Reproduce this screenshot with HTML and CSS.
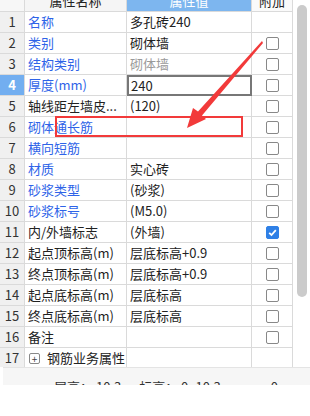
FILE: index.html
```html
<!DOCTYPE html>
<html lang="zh-CN">
<head>
    <meta charset="UTF-8">
    <title>属性编辑</title>
    <link rel="stylesheet" href="styles.css">
</head>
<body>
    <div class="panel">
        <div class="grid-wrap">
            <div class="grid">
                <div class="row head">
                    <div class="num"></div>
                    <div class="name">属性名称</div>
                    <div class="val">属性值</div>
                    <div class="add">附加</div>
                </div>
                <div class="row">
                    <div class="num">1</div>
                    <div class="name blue">名称</div>
                    <div class="val">多孔砖240</div>
                    <div class="add"></div>
                </div>
                <div class="row">
                    <div class="num">2</div>
                    <div class="name blue">类别</div>
                    <div class="val">砌体墙</div>
                    <div class="add"><span class="box"></span></div>
                </div>
                <div class="row">
                    <div class="num">3</div>
                    <div class="name blue">结构类别</div>
                    <div class="val muted">砌体墙</div>
                    <div class="add"><span class="box"></span></div>
                </div>
                <div class="row current">
                    <div class="num">4</div>
                    <div class="name blue">厚度(mm)</div>
                    <div class="val edit">240</div>
                    <div class="add"><span class="box"></span></div>
                </div>
                <div class="row">
                    <div class="num">5</div>
                    <div class="name">轴线距左墙皮...</div>
                    <div class="val">(120)</div>
                    <div class="add"><span class="box"></span></div>
                </div>
                <div class="row">
                    <div class="num">6</div>
                    <div class="name blue">砌体通长筋</div>
                    <div class="val"></div>
                    <div class="add"><span class="box"></span></div>
                </div>
                <div class="row">
                    <div class="num">7</div>
                    <div class="name blue">横向短筋</div>
                    <div class="val"></div>
                    <div class="add"><span class="box"></span></div>
                </div>
                <div class="row">
                    <div class="num">8</div>
                    <div class="name blue">材质</div>
                    <div class="val">实心砖</div>
                    <div class="add"><span class="box"></span></div>
                </div>
                <div class="row">
                    <div class="num">9</div>
                    <div class="name blue">砂浆类型</div>
                    <div class="val">(砂浆)</div>
                    <div class="add"><span class="box"></span></div>
                </div>
                <div class="row">
                    <div class="num">10</div>
                    <div class="name blue">砂浆标号</div>
                    <div class="val">(M5.0)</div>
                    <div class="add"><span class="box"></span></div>
                </div>
                <div class="row">
                    <div class="num">11</div>
                    <div class="name">内/外墙标志</div>
                    <div class="val">(外墙)</div>
                    <div class="add"><span class="box checked"><svg viewBox="0 0 13 13" width="13" height="13"><path d="M3.2 6.8 L5.5 9 L9.8 4.2" fill="none" stroke="#fff" stroke-width="1.8"/></svg></span></div>
                </div>
                <div class="row">
                    <div class="num">12</div>
                    <div class="name">起点顶标高(m)</div>
                    <div class="val">层底标高+0.9</div>
                    <div class="add"><span class="box"></span></div>
                </div>
                <div class="row">
                    <div class="num">13</div>
                    <div class="name">终点顶标高(m)</div>
                    <div class="val">层底标高+0.9</div>
                    <div class="add"><span class="box"></span></div>
                </div>
                <div class="row">
                    <div class="num">14</div>
                    <div class="name">起点底标高(m)</div>
                    <div class="val">层底标高</div>
                    <div class="add"><span class="box"></span></div>
                </div>
                <div class="row">
                    <div class="num">15</div>
                    <div class="name">终点底标高(m)</div>
                    <div class="val">层底标高</div>
                    <div class="add"><span class="box"></span></div>
                </div>
                <div class="row">
                    <div class="num">16</div>
                    <div class="name">备注</div>
                    <div class="val"></div>
                    <div class="add"><span class="box"></span></div>
                </div>
                <div class="row">
                    <div class="num">17</div>
                    <div class="name"><span class="expand">+</span>钢筋业务属性</div>
                    <div class="val"></div>
                    <div class="add"></div>
                </div>
            </div>
            <div class="scroll"><div class="thumb"></div></div>
        </div>
        <div class="status">
            <span class="floor">层高： 10.3</span>
            <span class="elev">标高： 0~10.3</span>
            <span class="zero">0</span>
        </div>
    </div>

    <!-- annotation drawn over the screenshot -->
    <div class="mark"></div>
    <svg class="arrow" viewBox="0 0 310 416" width="310" height="416">
        <polygon points="262,41 263,43 202,115.5 206,119 187,128 193,108 198,111.5" fill="#f23a3a"/>
    </svg>
</body>
</html>
```

FILE: styles.css
```css
body {
    margin: 0;
    background: #fff;
    font-family: "Noto Sans CJK SC", "Noto Sans", sans-serif;
    font-size: 13px;
    color: #222;
    width: 310px;
    height: 416px;
    overflow: hidden;
    position: relative;
}
.panel {
    display: flex;
    flex-direction: column;
}
.grid-wrap {
    display: flex;
    height: 367px;
    overflow: hidden;
}
.grid {
    width: 293px;
    margin-top: -9px;
}
.row {
    display: grid;
    grid-template-columns: 25px 102px 125px 41px;
    height: 21px;
}
.row > div {
    box-sizing: border-box;
    border-right: 1px solid #dadada;
    border-bottom: 1px solid #dadada;
    line-height: 20px;
    white-space: nowrap;
    overflow: hidden;
}
.num {
    background: #f0f0f0;
    text-align: center;
    color: #333;
}
.name {
    padding-left: 3px;
    display: flex;
    align-items: center;
}
.val {
    padding-left: 3px;
}
.add {
    display: flex;
    align-items: center;
    justify-content: center;
}
.blue {
    color: #2e63e8;
}
.muted {
    color: #9a9a9a;
}
.head .num {
    background: #f7f7f7;
}
.head .name {
    background: #f5f5f5;
    justify-content: center;
    padding-left: 0;
}
.head .val {
    background: #7db6ef;
    color: #fff;
    text-align: center;
    padding-left: 0;
}
.head .add {
    background: #fafafa;
}
.current .num {
    background: #72aef0;
    color: #fff;
    font-weight: bold;
}
.row > .edit {
    border: 2px solid #777;
    line-height: 17px;
    padding-left: 2px;
}
.box {
    box-sizing: border-box;
    width: 13px;
    height: 13px;
    border: 1px solid #888;
    border-radius: 2px;
    background: #fff;
    margin-left: 1px;
}
.box.checked {
    background: #2f80e6;
    border-color: #2f80e6;
    position: relative;
}
.box.checked svg {
    position: absolute;
    left: -1px;
    top: -1px;
}
.expand {
    box-sizing: border-box;
    width: 11px;
    height: 11px;
    border: 1px solid #888;
    border-radius: 2px;
    font-size: 10px;
    line-height: 9px;
    text-align: center;
    color: #444;
    margin: 0 7px 0 1px;
}
.scroll {
    flex: 1;
    padding: 5px 0 0 4px;
}
.thumb {
    width: 10px;
    height: 292px;
    background: #cbcbcb;
    border-radius: 5px;
}
.status {
    height: 18px;
    margin-left: 3px;
    background: #f6f6f6;
    border-top: 1px solid #e4e4e4;
    overflow: hidden;
    display: flex;
    color: #333;
    padding-top: 11px;
    box-sizing: border-box;
    line-height: 16px;
}
.floor {
    margin-left: 51px;
}
.elev {
    margin-left: 18px;
}
.zero {
    margin-left: 50px;
}
.mark {
    position: absolute;
    left: 55px;
    top: 116px;
    width: 188px;
    height: 21px;
    border: 2.5px solid #f23a3a;
    box-sizing: border-box;
}
.arrow {
    position: absolute;
    left: 0;
    top: 0;
}
```
